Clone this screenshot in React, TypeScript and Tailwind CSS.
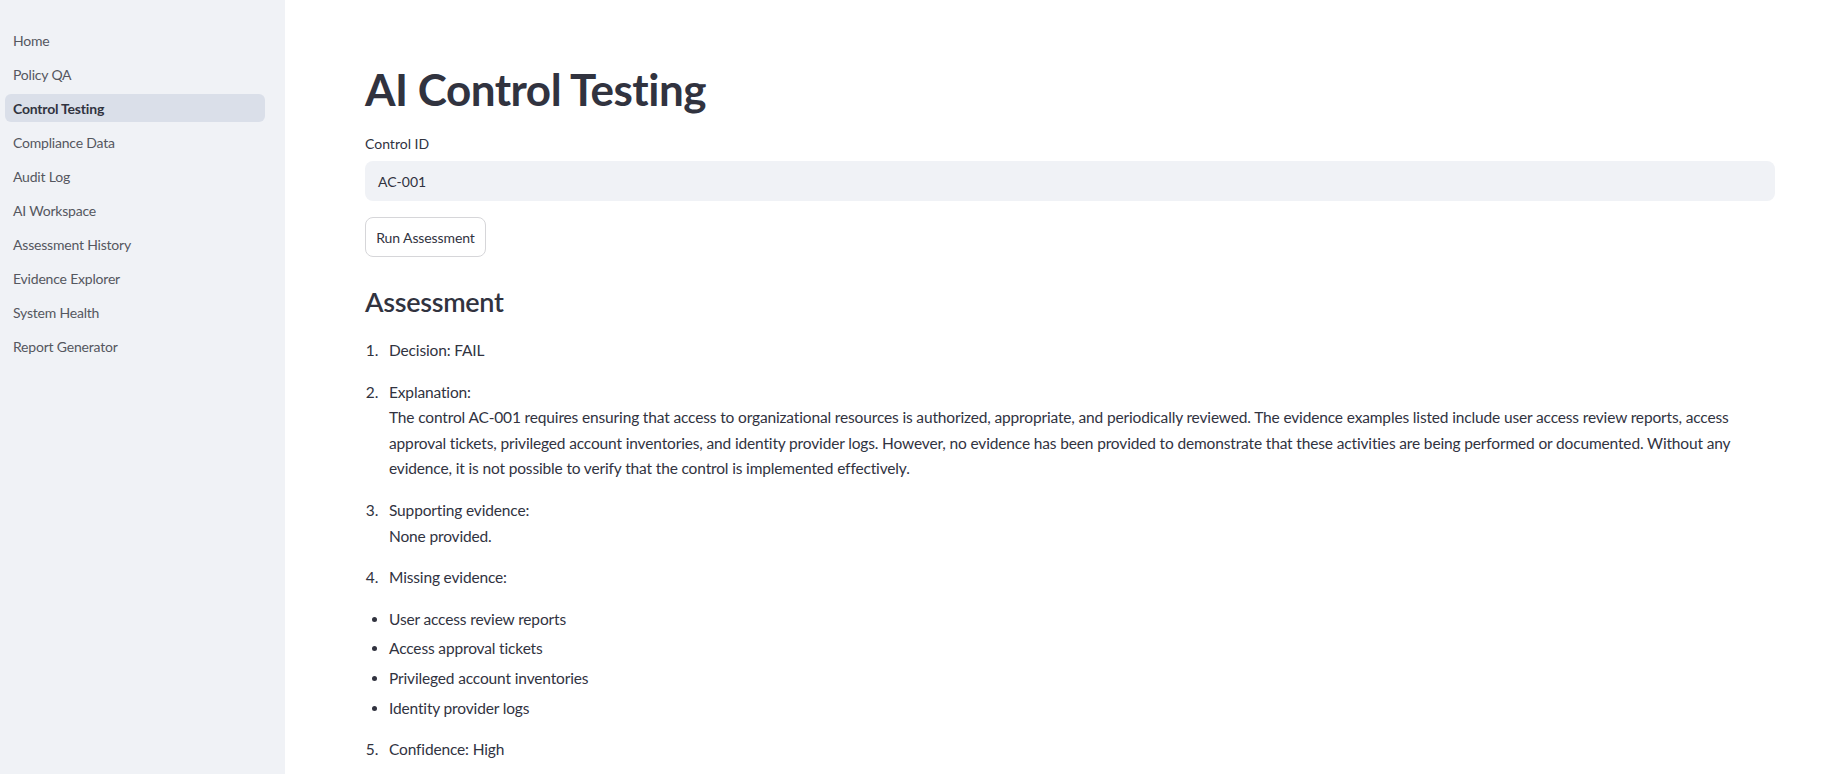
const pages = [
  "Home",
  "Policy QA",
  "Control Testing",
  "Compliance Data",
  "Audit Log",
  "AI Workspace",
  "Assessment History",
  "Evidence Explorer",
  "System Health",
  "Report Generator",
];

const missing = [
  "User access review reports",
  "Access approval tickets",
  "Privileged account inventories",
  "Identity provider logs",
];

function Sidebar({ active }: { active: string }) {
  return (
    <aside className="w-[285px] shrink-0 bg-[#f0f2f6] pl-[5px] pr-5 pt-[26px]">
      <nav className="flex flex-col gap-1.5">
        {pages.map((p) => (
          <a
            key={p}
            href="#"
            className={
              p === active
                ? "flex h-7 items-center rounded-[6px] bg-[#dadfe9] px-2 text-[14px] font-bold tracking-[-0.2px] text-[#31333f]"
                : "flex h-7 items-center rounded-[6px] px-2 text-[14px] tracking-[-0.2px] text-[#55575f]"
            }
          >
            {p}
          </a>
        ))}
      </nav>
    </aside>
  );
}

export default function App() {
  return (
    <div className="flex min-h-screen bg-white font-['Lato',sans-serif] text-[#31333f]">
      <Sidebar active="Control Testing" />

      <main className="flex flex-1 flex-col pl-20 pr-12 pt-[63px] pb-10">
        <h1 className="text-[44px] font-bold leading-[52px] tracking-[-0.5px]">AI Control Testing</h1>

        <label className="mt-[19px] text-[14px] leading-5">Control ID</label>
        <div className="mt-[7px] flex h-10 items-center rounded-lg bg-[#f0f2f6] px-[13px] text-[14px]">
          AC-001
        </div>

        <button className="mt-4 h-10 w-[121px] rounded-lg border border-[#d6d6d9] bg-white text-[14px] tracking-[-0.1px]">
          Run Assessment
        </button>

        <h2 className="mt-[27px] text-[27px] font-semibold leading-9 tracking-[-0.3px]">Assessment</h2>

        <div className="mt-[18px] text-[15.5px] leading-[25.6px] tracking-[-0.15px]">
          <ol className="list-decimal space-y-4 pl-[17px]">
            <li className="pl-[7px]">Decision: FAIL</li>
            <li className="pl-[7px]">
              Explanation:
              <br />
              The control AC-001 requires ensuring that access to organizational resources is authorized, appropriate, and
              periodically reviewed. The evidence examples listed include user access review reports, access approval
              tickets, privileged account inventories, and identity provider logs. However, no evidence has been provided to
              demonstrate that these activities are being performed or documented. Without any evidence, it is not possible
              to verify that the control is implemented effectively.
            </li>
            <li className="pl-[7px]">
              Supporting evidence:
              <br />
              None provided.
            </li>
            <li className="pl-[7px]">Missing evidence:</li>
          </ol>

          <ul className="mt-4 list-disc space-y-1 pl-6">
            {missing.map((m) => (
              <li key={m}>{m}</li>
            ))}
          </ul>

          <ol start={5} className="mt-4 list-decimal pl-[17px]">
            <li className="pl-[7px]">Confidence: High</li>
          </ol>
        </div>
      </main>
    </div>
  );
}
